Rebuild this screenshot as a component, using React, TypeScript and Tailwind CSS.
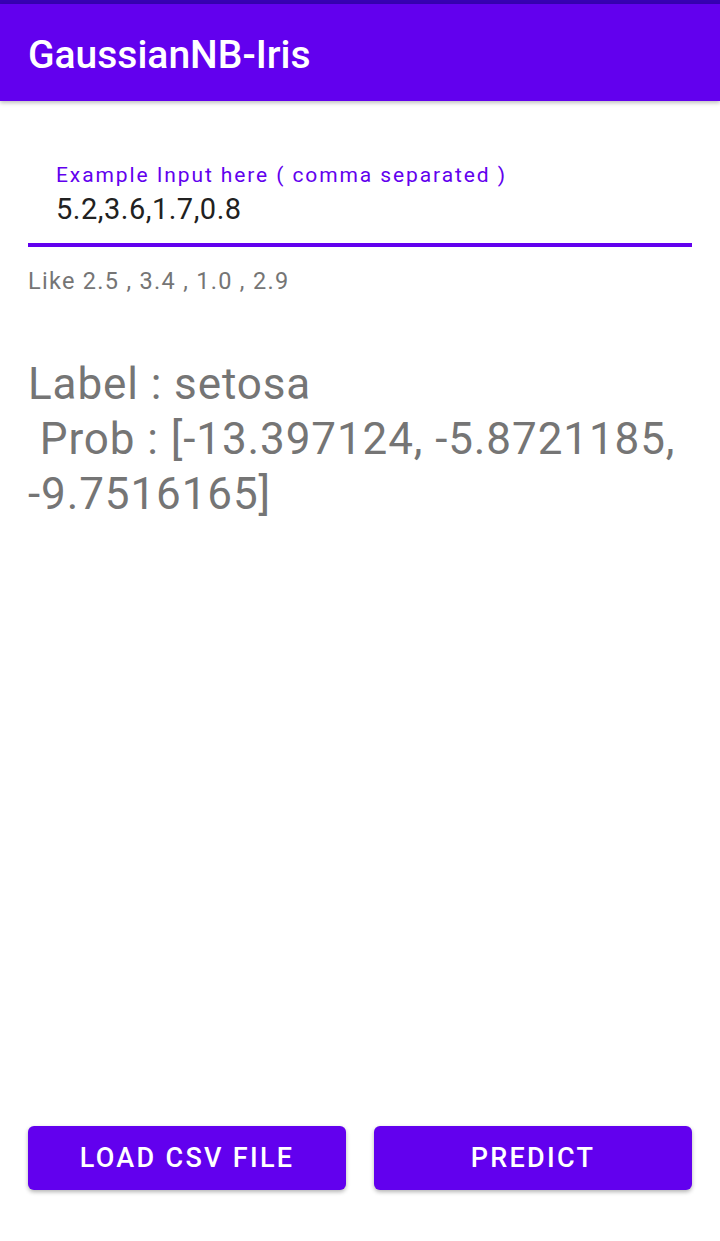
import React from "react";

const App = () => {
  return (
    <div
      className="w-[720px] h-[1241px] bg-white flex flex-col"
      style={{ fontFamily: "Roboto, 'Noto Sans', sans-serif" }}
    >
      <div className="h-[4px] bg-[#3700B3]" />
      <div className="h-[97px] bg-[#6200EE] flex items-center px-[28px] pt-[5px] shadow-[0_2px_4px_rgba(0,0,0,0.25)] z-10">
        <h1 className="text-white text-[39px] font-medium">GaussianNB-Iris</h1>
      </div>

      <div className="flex flex-col px-[28px] pt-[60px] flex-1">
        <div className="flex flex-col">
          <label className="pl-[28px] text-[#6200EE] text-[21px] leading-[28px] tracking-[1.9px]">
            Example Input here ( comma separated )
          </label>
          <div className="pl-[28px] text-[#212121] text-[29px] leading-[40px] tracking-[0.5px] pb-[14px]">
            5.2,3.6,1.7,0.8
          </div>
          <div className="h-[4px] bg-[#6200EE]" />
        </div>
        <p className="mt-[18px] text-[#757575] text-[23.5px] leading-[32px] tracking-[1.3px]">
          Like 2.5 , 3.4 , 1.0 , 2.9
        </p>

        <p className="mt-[60px] text-[#757575] text-[44px] leading-[55px] tracking-[0.9px] whitespace-pre-wrap">
          {"Label : setosa\n Prob : [-13.397124, -5.8721185, -9.7516165]"}
        </p>

        <div className="flex-1" />

        <div className="flex gap-[28px] pb-[51px]">
          <button className="flex-1 h-[64px] rounded-[6px] bg-[#6200EE] text-white text-[27px] font-medium tracking-[2.3px] shadow-[0_2px_4px_rgba(0,0,0,0.3)]">
            LOAD CSV FILE
          </button>
          <button className="flex-1 h-[64px] rounded-[6px] bg-[#6200EE] text-white text-[27px] font-medium tracking-[2.3px] shadow-[0_2px_4px_rgba(0,0,0,0.3)]">
            PREDICT
          </button>
        </div>
      </div>
    </div>
  );
};

export default App;
